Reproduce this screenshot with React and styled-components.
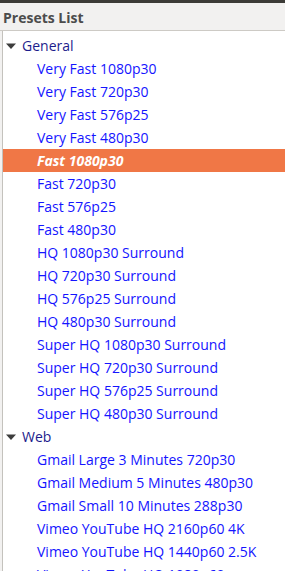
import React from 'react'
import styled, { createGlobalStyle } from 'styled-components'

const GlobalStyle = createGlobalStyle`
    html, body {
        margin: 0;
        padding: 0;
        background: #f2f1f0;
        overflow: hidden;
    }
`

const presets = [
    {
        title: 'General',
        items: [
            'Very Fast 1080p30',
            'Very Fast 720p30',
            'Very Fast 576p25',
            'Very Fast 480p30',
            'Fast 1080p30',
            'Fast 720p30',
            'Fast 576p25',
            'Fast 480p30',
            'HQ 1080p30 Surround',
            'HQ 720p30 Surround',
            'HQ 576p25 Surround',
            'HQ 480p30 Surround',
            'Super HQ 1080p30 Surround',
            'Super HQ 720p30 Surround',
            'Super HQ 576p25 Surround',
            'Super HQ 480p30 Surround',
        ],
    },
    {
        title: 'Web',
        items: [
            'Gmail Large 3 Minutes 720p30',
            'Gmail Medium 5 Minutes 480p30',
            'Gmail Small 10 Minutes 288p30',
            'Vimeo YouTube HQ 2160p60 4K',
            'Vimeo YouTube HQ 1440p60 2.5K',
            'Vimeo YouTube HQ 1080p60',
        ],
    },
]

const selected = 'Fast 1080p30'

const App = () => {
    return (
        <StyledWindow>
            <GlobalStyle />
            <StyledTopBar />
            <StyledHeader>Presets List</StyledHeader>
            <StyledFrame>
                <StyledList>
                    {presets.map((group) => (
                        <React.Fragment key={group.title}>
                            <StyledCategory>
                                <StyledArrow viewBox="0 0 10 10">
                                    <path d="M0 2.5 L10 2.5 L5 8 Z" fill="#3c3c3c" />
                                </StyledArrow>
                                {group.title}
                            </StyledCategory>
                            {group.items.map((item) => (
                                <StyledItem key={item} $active={item === selected}>{item}</StyledItem>
                            ))}
                        </React.Fragment>
                    ))}
                </StyledList>
            </StyledFrame>
        </StyledWindow>
    )
}

const StyledWindow = styled.div`
    width: 285px;
    height: 571px;
    overflow: hidden;
    display: flex;
    flex-direction: column;
    font-family: "Open Sans", "Noto Sans", sans-serif;
    font-size: 14px;
`

const StyledTopBar = styled.div`
    height: 3px;
    background: #3c3b37;
    flex-shrink: 0;
`

const StyledHeader = styled.div`
    height: 28px;
    flex-shrink: 0;
    display: flex;
    align-items: center;
    padding-left: 3px;
    padding-top: 1px;
    box-sizing: border-box;
    font-weight: bold;
    font-size: 14px;
    color: #4c4c4c;
    background: #f2f1f0;
    border-bottom: 1px solid #cdcac5;
`

const StyledFrame = styled.div`
    flex: 1;
    padding-left: 2px;
    background: #f2f1f0;
    display: flex;
`

const StyledList = styled.div`
    flex: 1;
    background: #ffffff;
    border-left: 1px solid #c4c2bd;
    padding-top: 3px;
    overflow: hidden;
`

const StyledCategory = styled.div`
    height: 23px;
    display: flex;
    align-items: center;
    padding-left: 3px;
    color: #1c1c8c;
`

const StyledArrow = styled.svg`
    width: 10px;
    height: 10px;
    margin-right: 6px;
`

const StyledItem = styled.div`
    height: 23px;
    display: flex;
    align-items: center;
    padding-left: 34px;
    white-space: nowrap;
    color: ${(props) => (props.$active ? '#ffffff' : '#1414ff')};
    background: ${(props) => (props.$active ? '#f07746' : 'transparent')};
    font-weight: ${(props) => (props.$active ? 'bold' : 'normal')};
    font-style: ${(props) => (props.$active ? 'italic' : 'normal')};
`

export default App
